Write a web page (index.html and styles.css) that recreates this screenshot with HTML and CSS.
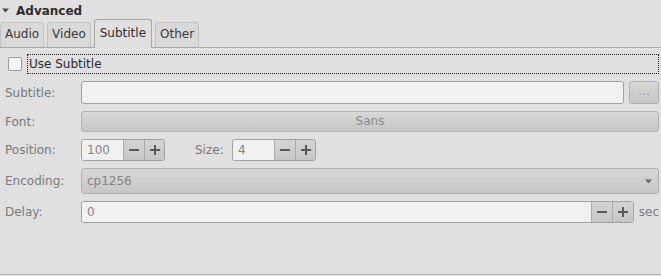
FILE: index.html
```html
<!DOCTYPE html>
<html>
<head>
<meta charset="utf-8">
<link rel="stylesheet" href="styles.css">
</head>
<body>
<div class="expander">
  <svg class="arrow" width="7" height="5" viewBox="0 0 7 5"><path d="M0 0.5h7L3.5 4.5z" fill="#4a4a4a"/></svg>
  <span class="expander-title">Advanced</span>
</div>
<div class="tabs">
  <div class="tab">Audio</div>
  <div class="tab">Video</div>
  <div class="tab active">Subtitle</div>
  <div class="tab">Other</div>
</div>
<div class="panel">
  <div class="row check-row">
    <span class="checkbox"></span>
    <span class="check-label">Use Subtitle</span>
  </div>
  <div class="row r-subtitle">
    <span class="label">Subtitle:</span>
    <div class="entry grow"></div>
    <div class="button ellipsis">...</div>
  </div>
  <div class="row r-font">
    <span class="label">Font:</span>
    <div class="button grow font-btn">Sans</div>
  </div>
  <div class="row r-pos">
    <span class="label">Position:</span>
    <div class="spin small">
      <span class="spin-text">100</span>
      <span class="spin-btn"><svg width="10" height="10" viewBox="0 0 10 10"><path d="M0 5h10" stroke="#5a5a5a" stroke-width="2"/></svg></span>
      <span class="spin-btn"><svg width="10" height="10" viewBox="0 0 10 10"><path d="M0 5h10M5 0v10" stroke="#5a5a5a" stroke-width="2"/></svg></span>
    </div>
    <span class="label size-label">Size:</span>
    <div class="spin small">
      <span class="spin-text">4</span>
      <span class="spin-btn"><svg width="10" height="10" viewBox="0 0 10 10"><path d="M0 5h10" stroke="#5a5a5a" stroke-width="2"/></svg></span>
      <span class="spin-btn"><svg width="10" height="10" viewBox="0 0 10 10"><path d="M0 5h10M5 0v10" stroke="#5a5a5a" stroke-width="2"/></svg></span>
    </div>
  </div>
  <div class="row r-enc">
    <span class="label">Encoding:</span>
    <div class="button grow combo">
      <span class="combo-text">cp1256</span>
      <svg class="combo-arrow" width="7" height="5" viewBox="0 0 7 5"><path d="M0 0.5h7L3.5 4.5z" fill="#6a6a6a"/></svg>
    </div>
  </div>
  <div class="row r-delay">
    <span class="label">Delay:</span>
    <div class="spin grow">
      <span class="spin-text grow">0</span>
      <span class="spin-btn"><svg width="10" height="10" viewBox="0 0 10 10"><path d="M0 5h10" stroke="#5a5a5a" stroke-width="2"/></svg></span>
      <span class="spin-btn"><svg width="10" height="10" viewBox="0 0 10 10"><path d="M0 5h10M5 0v10" stroke="#5a5a5a" stroke-width="2"/></svg></span>
    </div>
    <span class="unit">sec</span>
  </div>
</div>
</body>
</html>
```
FILE: styles.css
```css
html, body {
  margin: 0;
  padding: 0;
}
body {
  width: 661px;
  height: 276px;
  overflow: hidden;
  background: #e0e0e0;
  font-family: "DejaVu Sans", sans-serif;
  font-size: 12px;
  color: #3a3a3a;
}
.expander {
  box-sizing: border-box;
  height: 19px;
  display: flex;
  align-items: center;
  padding: 2px 0 0 2px;
  gap: 7px;
}
.arrow {
  margin-top: -1px;
}
.expander-title {
  font-weight: bold;
  color: #2e2e2e;
}
.tabs {
  display: flex;
  align-items: flex-end;
  gap: 3px;
  height: 28px;
  border-bottom: 1px solid #a8a8a8;
}
.tab {
  box-sizing: border-box;
  height: 25px;
  padding: 1px 4px 3px 4px;
  border: 1px solid #c2c2c2;
  border-bottom: none;
  border-radius: 3px 3px 0 0;
  background: #d9d9d9;
  display: flex;
  align-items: center;
  color: #3a3a3a;
}
.tab.active {
  height: 29px;
  margin-bottom: -1px;
  padding: 1px 5px 3px 5px;
  background: #e0e0e0;
  border-color: #a8a8a8;
  color: #2e2e2e;
}
.panel {
  box-sizing: border-box;
  height: 227px;
  padding: 6px 2px 0 0;
  border-bottom: 1px solid #b4b4b4;
  display: flex;
  flex-direction: column;
  gap: 7px;
}
.row {
  display: flex;
  align-items: center;
  flex: none;
}
.grow {
  flex: 1;
  min-width: 0;
}
.check-row {
  height: 20px;
  padding-left: 8px;
}
.checkbox {
  box-sizing: border-box;
  width: 14px;
  height: 14px;
  margin-right: 5px;
  background: #f6f6f6;
  border: 1px solid #9a9a9a;
  border-radius: 2px;
}
.check-label {
  flex: 1;
  box-sizing: border-box;
  height: 20px;
  line-height: 18px;
  padding-left: 1px;
  border: 1px dotted #202020;
  color: #2a2a2a;
}
.label {
  box-sizing: border-box;
  width: 81px;
  padding-left: 5px;
  flex: none;
  color: #7a7a7a;
}
.entry {
  box-sizing: border-box;
  height: 23px;
  background: #f1f1f1;
  border: 1px solid #a2a2a2;
  border-radius: 3px;
}
.button {
  box-sizing: border-box;
  background: linear-gradient(#d7d7d7, #c7c7c7);
  border: 1px solid #b2b2b2;
  border-radius: 3px;
  color: #8a8a8a;
}
.r-subtitle {
  height: 23px;
  gap: 5px;
}
.r-subtitle .label {
  margin-right: -5px;
}
.ellipsis {
  width: 30px;
  height: 23px;
  line-height: 19px;
  text-align: center;
  color: #9c9c9c;
}
.r-font {
  height: 21px;
}
.font-btn {
  height: 21px;
  line-height: 19px;
  text-align: center;
}
.r-pos {
  height: 22px;
}
.spin {
  box-sizing: border-box;
  height: 22px;
  display: flex;
  border: 1px solid #a2a2a2;
  border-radius: 3px;
  overflow: hidden;
}
.spin.small {
  width: 84px;
  flex: none;
}
.spin-text {
  width: 41px;
  flex: none;
  box-sizing: border-box;
  padding-left: 5px;
  line-height: 20px;
  background: #f1f1f1;
  color: #858585;
}
.spin-text.grow {
  flex: 1;
}
.spin-btn {
  width: 20px;
  flex: none;
  display: flex;
  align-items: center;
  justify-content: center;
  border-left: 1px solid #acacac;
  background: linear-gradient(#d4d4d4, #c6c6c6);
}
.size-label {
  width: 67px;
  padding-left: 30px;
}
.r-enc {
  height: 26px;
}
.combo {
  height: 26px;
  display: flex;
  align-items: center;
  justify-content: space-between;
  padding: 0 5px 0 5px;
  color: #858585;
}
.combo-arrow {
  margin-right: 1px;
}
.r-delay {
  height: 22px;
}
.unit {
  margin-left: 5px;
  color: #7a7a7a;
}
```
